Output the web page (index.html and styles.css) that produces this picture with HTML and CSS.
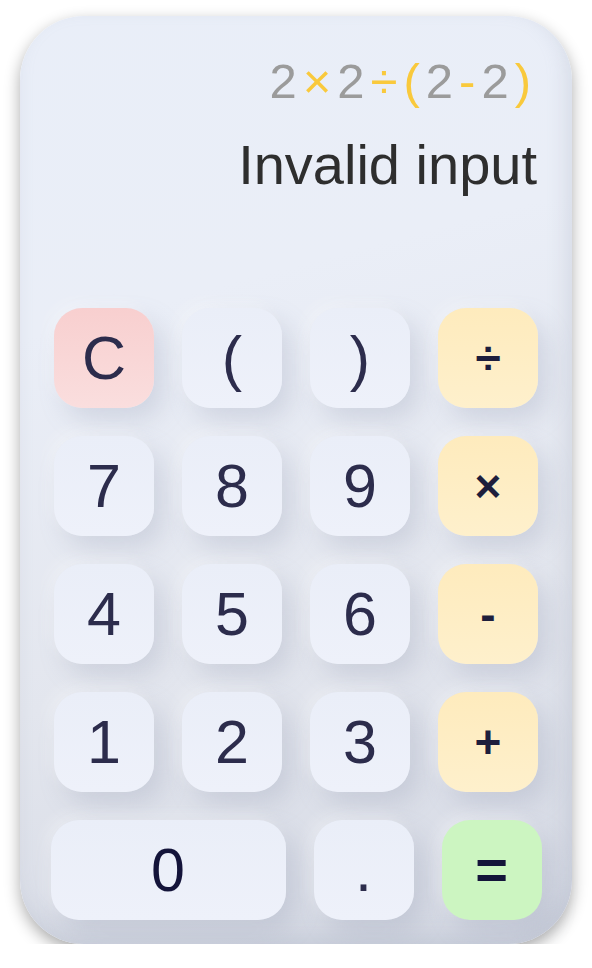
FILE: index.html
```html
<!DOCTYPE html>
<html>
<head>
<meta charset="utf-8">
<link rel="stylesheet" href="styles.css">
</head>
<body>
<div class="calc">
  <div class="display">
    <div class="expr"><span class="num">2</span><span class="op">×</span><span class="num">2</span><span class="op">÷</span><span class="op">(</span><span class="num">2</span><span class="op">-</span><span class="num">2</span><span class="op">)</span></div>
    <div class="result">Invalid input</div>
  </div>
  <div class="keypad">
    <div class="row">
      <button class="key clear">C</button>
      <button class="key">(</button>
      <button class="key">)</button>
      <button class="key oper">÷</button>
    </div>
    <div class="row">
      <button class="key">7</button>
      <button class="key">8</button>
      <button class="key">9</button>
      <button class="key oper">×</button>
    </div>
    <div class="row">
      <button class="key">4</button>
      <button class="key">5</button>
      <button class="key">6</button>
      <button class="key oper">-</button>
    </div>
    <div class="row">
      <button class="key">1</button>
      <button class="key">2</button>
      <button class="key">3</button>
      <button class="key oper">+</button>
    </div>
    <div class="row">
      <button class="key zero">0</button>
      <button class="key">.</button>
      <button class="key equals">=</button>
    </div>
  </div>
</div>
</body>
</html>
```
FILE: styles.css
```css
* { box-sizing: border-box; }
html, body {
  margin: 0;
  padding: 0;
  background: #ffffff;
}
body {
  font-family: "Liberation Sans", Arial, sans-serif;
  padding: 16px 20px 0 20px;
}
.calc {
  width: 552px;
  height: 928px;
  border-radius: 64px;
  background: linear-gradient(165deg, #e9eef8 0%, #eaeef7 30%, #e3e6ee 65%, #d4d8e3 100%);
  box-shadow: 0 6px 16px rgba(0, 0, 0, 0.33), inset -6px -10px 20px rgba(140, 148, 170, 0.2);
  display: flex;
  flex-direction: column;
  padding-top: 37px;
}
.display {
  padding-right: 35px;
  text-align: right;
  height: 255px;
}
.expr {
  font-size: 49px;
  line-height: 56px;
  letter-spacing: 6px;
}
.expr .num { color: #9b9b9b; }
.expr .op { color: #f9c93c; }
.result {
  margin-top: 24px;
  font-size: 56px;
  line-height: 64px;
  color: #2e2e2e;
}
.keypad {
  display: flex;
  flex-direction: column;
  gap: 28px;
}
.row {
  display: flex;
  justify-content: center;
  gap: 28px;
}
.key {
  width: 100px;
  height: 100px;
  border: none;
  border-radius: 28px;
  padding: 0;
  font-family: "Liberation Sans", Arial, sans-serif;
  font-size: 61px;
  line-height: 100px;
  color: #2c2c4c;
  background: linear-gradient(180deg, #eaeef8 0%, #eef1fa 100%);
  box-shadow: 10px 12px 24px rgba(140, 148, 170, 0.25), -6px -6px 14px rgba(255, 255, 255, 0.3);
}
.clear {
  background: linear-gradient(180deg, #f8cfcf 0%, #fadede 100%);
}
.oper {
  background: linear-gradient(180deg, #feebbd 0%, #fef0cc 100%);
  color: #1e1e3c;
  font-weight: bold;
  font-size: 46px;
}
.equals {
  background: #ccf5c1;
  color: #14143a;
  font-weight: bold;
  font-size: 56px;
}
.zero {
  width: 235px;
  color: #14143a;
}
```
